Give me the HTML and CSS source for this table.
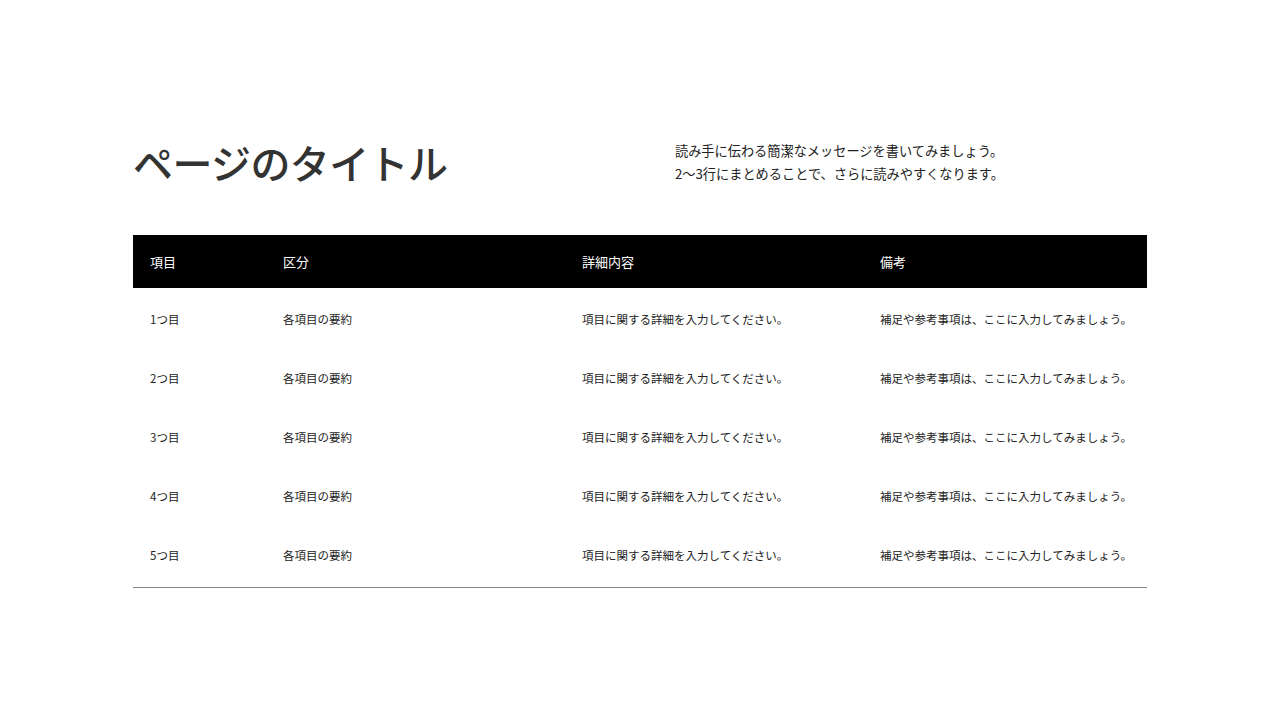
FILE: index.html
```html
<!DOCTYPE html>
<html lang="ja">
<head>
<meta charset="utf-8">
<title>ページのタイトル</title>
<link rel="stylesheet" href="styles.css">
</head>
<body>
<main class="slide">
  <header class="head">
    <h1 class="title">ページのタイトル</h1>
    <p class="lead">読み手に伝わる簡潔なメッセージを書いてみましょう。<br>2〜3行にまとめることで、さらに読みやすくなります。</p>
  </header>
  <section class="table">
    <div class="row thead">
      <div class="cell">項目</div>
      <div class="cell">区分</div>
      <div class="cell">詳細内容</div>
      <div class="cell">備考</div>
    </div>
    <div class="tbody">
      <div class="row">
        <div class="cell">1つ目</div>
        <div class="cell">各項目の要約</div>
        <div class="cell">項目に関する詳細を入力してください。</div>
        <div class="cell">補足や参考事項は、ここに入力してみましょう。</div>
      </div>
      <div class="row">
        <div class="cell">2つ目</div>
        <div class="cell">各項目の要約</div>
        <div class="cell">項目に関する詳細を入力してください。</div>
        <div class="cell">補足や参考事項は、ここに入力してみましょう。</div>
      </div>
      <div class="row">
        <div class="cell">3つ目</div>
        <div class="cell">各項目の要約</div>
        <div class="cell">項目に関する詳細を入力してください。</div>
        <div class="cell">補足や参考事項は、ここに入力してみましょう。</div>
      </div>
      <div class="row">
        <div class="cell">4つ目</div>
        <div class="cell">各項目の要約</div>
        <div class="cell">項目に関する詳細を入力してください。</div>
        <div class="cell">補足や参考事項は、ここに入力してみましょう。</div>
      </div>
      <div class="row">
        <div class="cell">5つ目</div>
        <div class="cell">各項目の要約</div>
        <div class="cell">項目に関する詳細を入力してください。</div>
        <div class="cell">補足や参考事項は、ここに入力してみましょう。</div>
      </div>
    </div>
  </section>
</main>
</body>
</html>
```
FILE: styles.css
```css
* { box-sizing: border-box; }
html, body { margin: 0; padding: 0; background: #fff; }
body {
  font-family: "Noto Sans CJK JP", "Noto Sans", sans-serif;
  color: #222;
  width: 1280px;
  height: 720px;
  overflow: hidden;
}
.slide {
  padding: 139px 133px 0 133px;
}
.head {
  display: flex;
  align-items: flex-start;
  height: 96px;
}
.title {
  margin: 0;
  width: 542px;
  font-size: 40px;
  line-height: 46px;
  font-weight: 500;
  color: #333;
  letter-spacing: -0.6px;
}
.lead {
  margin: 0;
  font-size: 13.2px;
  line-height: 23px;
  color: #222;
}
.table {
  width: 1014px;
  border-bottom: 1px solid #888;
}
.row {
  display: grid;
  grid-template-columns: 133px 299px 298px 284px;
  align-items: center;
}
.cell {
  padding-left: 17px;
  font-size: 11.5px;
  color: #222;
  white-space: nowrap;
}
.thead {
  background: #000;
  height: 53px;
}
.thead .cell {
  color: #fff;
  font-size: 13px;
}
.tbody {
  padding: 2px 0 3px;
}
.tbody .row {
  height: 58.8px;
}
```
